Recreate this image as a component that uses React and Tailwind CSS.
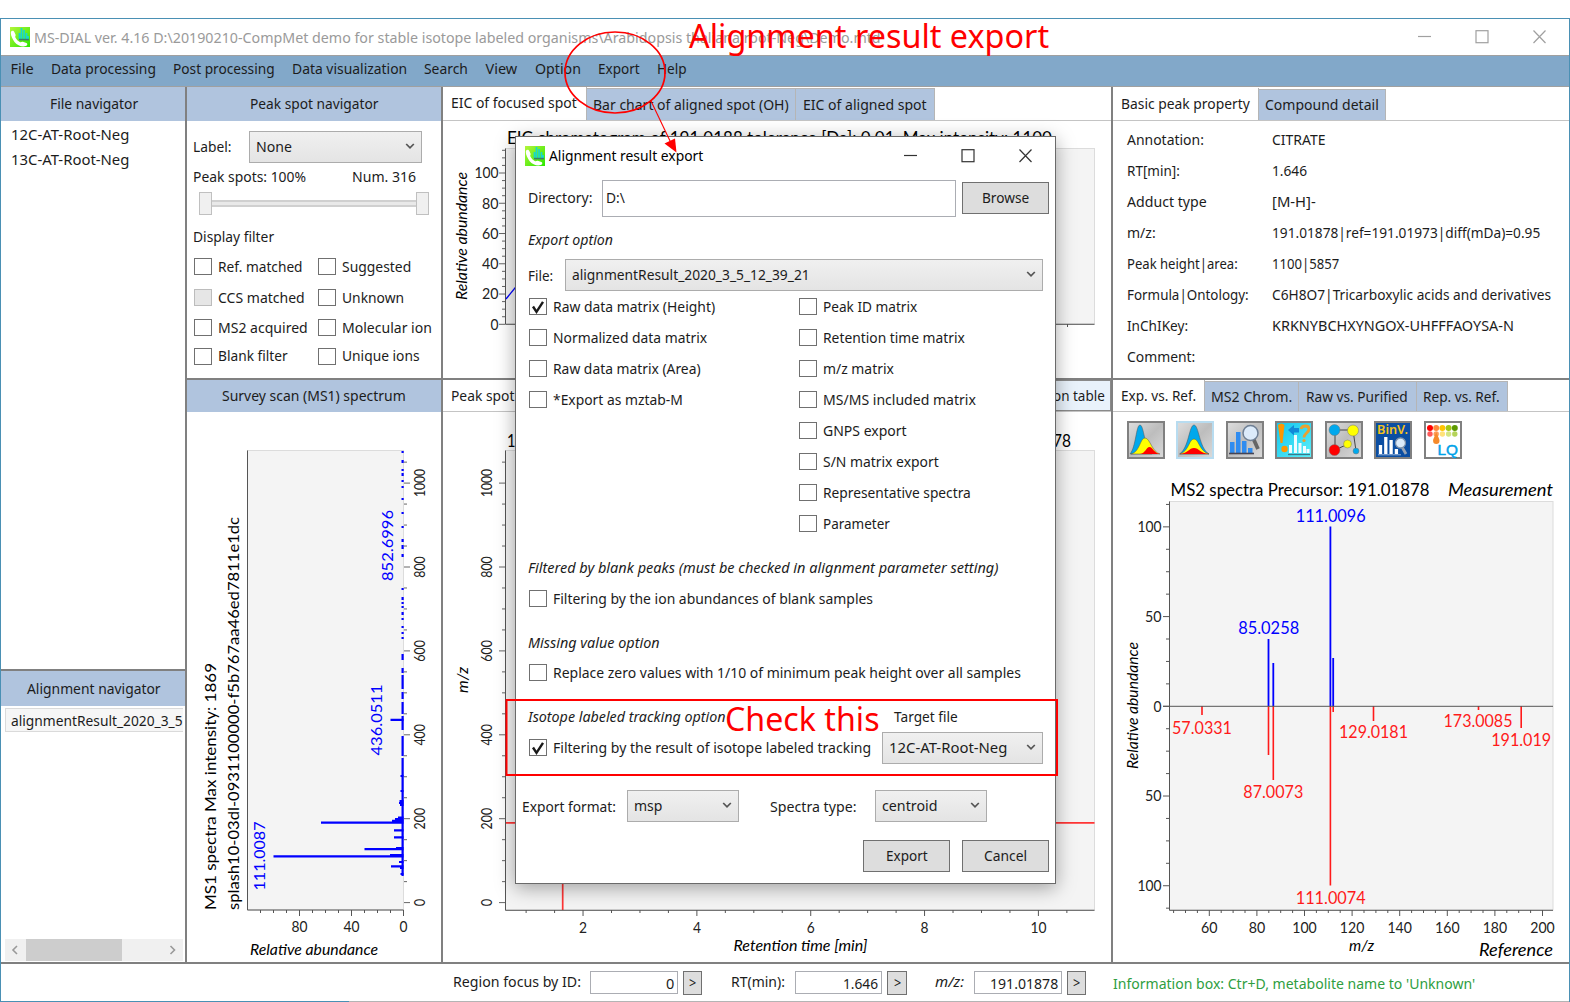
import { useLayoutEffect, useRef, useState } from "react";

const UI = "font-['Noto_Sans',sans-serif]";

// Text set to an exact advance width.
function T({ w, className = "", children }) {
  const ref = useRef(null);
  const [scale, setScale] = useState(1);
  useLayoutEffect(() => {
    if (w) setScale(w / ref.current.offsetWidth);
  }, [w, children]);
  return (
    <span className={`inline-block flex-none whitespace-pre ${className}`} style={{ width: w }}>
      <span ref={ref} className="inline-block origin-left" style={{ transform: `translateY(-1px) scaleX(${scale})` }}>
        {children}
      </span>
    </span>
  );
}

function AppIcon({ className }) {
  return (
    <svg className={`flex-none ${className}`} viewBox="0 0 20 20">
      <defs>
        <linearGradient id="lime" x1="0" y1="0" x2="1" y2="1">
          <stop offset="0" stopColor="#b4f53a" />
          <stop offset="1" stopColor="#2be800" />
        </linearGradient>
      </defs>
      <rect width="20" height="20" fill="url(#lime)" />
      <path d="M9.500 12V6M11.500 12V1M14 12V3M16.500 12V6M18 12V9" stroke="#17d6cf" strokeWidth="1.700" />
      <path d="M9 12.600h10" stroke="#3c7d6a" strokeWidth="1.600" />
      <path d="M1 4.800c.8-1.300 2.600-1.400 3.300.3l1.300 2.700c.3.900-.7 1.500-.3 2.500 1 2.300 2.800 4 4.800 4.900 1 .4 1.600-.7 2.700-.4l3.600 1.200c1.500.7 1 2.300-.6 3-3.200 1.300-8.200-.2-11.300-4C2.300 12.200.2 7.500 1 4.800z" fill="#fff" />
    </svg>
  );
}

const Chevron = ({ className = "" }) => (
  <svg className={`flex-none ${className}`} width="10" height="7" viewBox="0 0 10 7">
    <path d="M1.200 1l3.800 3.900L8.800 1" fill="none" stroke="#555" strokeWidth="1.700" />
  </svg>
);

function Select({ className, text, w }) {
  return (
    <div className={`flex flex-none items-center justify-between border border-[#acacac] bg-gradient-to-b from-[#f0f0f0] to-[#e4e4e4] pl-[6px] pr-[6px] ${className}`}>
      <T w={w}>{text}</T>
      <Chevron />
    </div>
  );
}

function Check({ label, w, checked, disabled, gap = "ml-[6px]" }) {
  return (
    <div className="flex h-full flex-none items-center">
      <span className={`flex h-[17px] w-[18px] flex-none items-center justify-center border ${disabled ? "border-[#bcbcbc] bg-[#e6e6e6]" : "border-[#707070] bg-white"}`}>
        {checked && (
          <svg width="14" height="14" viewBox="0 0 14 14">
            <path d="M2 6.500L5.500 11.800 12 1.800" fill="none" stroke="#1a1a1a" strokeWidth="2.400" />
          </svg>
        )}
      </span>
      <T w={w} className={gap}>{label}</T>
    </div>
  );
}

function Btn({ className, text, w }) {
  return (
    <div className={`flex flex-none items-center justify-center border border-[#707070] bg-[#dddddd] ${className}`}>
      <T w={w}>{text}</T>
    </div>
  );
}

const Header = ({ className, text, w }) => (
  <div className={`flex flex-none items-center justify-center bg-[#b0c4de] ${className}`}>
    <T w={w}>{text}</T>
  </div>
);

function Controls({ color, className, size, gap }) {
  return (
    <svg className={`flex-none ${className}`} width={size + gap * 2} height="14" viewBox={`0 0 ${size + gap * 2} 14`} fill="none" stroke={color} strokeWidth="1.200">
      <path d={`M0 6.500h${size}`} />
      <rect x={gap + 0.5} y="0.700" width={size - 1} height={size - 1} />
      <path d={`M${gap * 2 + 0.5} .5L${gap * 2 + size - 0.5} ${size}M${gap * 2 + size - 0.5} .5L${gap * 2 + 0.5} ${size}`} />
    </svg>
  );
}

// Chart label, spanning w pixels; v turns it to read upwards.
function L({ x, y, w, s = 14.5, fill = "#222", v, it, a = "middle", children }) {
  return (
    <text x={x} y={y} dy={s * (v ? 0.31 : 0.36)} textLength={w} lengthAdjust="spacingAndGlyphs" fontSize={s} fill={fill} textAnchor={a} fontStyle={it ? "italic" : "normal"} fontFamily="Lato, sans-serif" transform={v ? `rotate(-90 ${x} ${y})` : undefined}>
      {children}
    </text>
  );
}

const range = (a, b, step) => {
  const out = [];
  for (let v = a; v <= b + 1e-6; v += step) out.push(v);
  return out;
};

const BLUE = "#0000ff";
const RED = "#ff1a1a";

function MzAxis({ x, dir, labelX }) {
  const y = (v) => 902.6 - v * 0.4195;
  return (
    <g>
      <path stroke="#666" d={range(0, 1050, 50).map((v) => `M${x} ${y(v)}h${dir * (v % 200 ? 3 : 6)}`).join("")} />
      {range(0, 1000, 200).map((v) => (
        <L key={v} x={labelX} y={y(v)} v w={v === 0 ? 7.5 : v === 1000 ? 28 : 21.5} s={14.5}>{String(v)}</L>
      ))}
    </g>
  );
}

function SurveyChart() {
  const noise = [[451, 1], [460, 3], [469, 2], [473, 3], [480, 2], [486, 1], [498, 2], [512, 2], [526, 1], [539, 3], [545, 4], [554, 3], [588, 1], [597, 3], [602, 2], [606, 1], [612, 3], [618, 1], [626, 2], [632, 1], [637, 2], [654, 6], [668, 5], [675, 14], [692, 7], [702, 12], [716, 10], [726, 4], [736, 20], [758, 118]];
  const peaks = [[321, 822.6], [273.5, 856.3], [364.5, 849.2], [391, 866.3], [394, 837.3], [394, 830.3], [390.5, 719.8], [392, 820.8], [395, 819], [398, 817.5], [399, 803], [399.5, 801], [400, 805], [396, 848], [399, 862], [390, 855], [400.5, 776], [400.5, 791], [400.5, 874], [400, 868]];
  return (
    <svg className="block flex-none" width="254" height="550" viewBox="187 412 254 550">
      <rect x="247.500" y="450.500" width="156" height="459.500" fill="#f4f4f4" stroke="#dcdcdc" />
      <path d="M247.500 450.500V910H403.500" fill="none" stroke="#555" />
      <path d={peaks.map(([x, y]) => `M${x} ${y}H403.5`).join("")} stroke={BLUE} strokeWidth="2.2" />
      <path d={noise.map(([y, h]) => `M402.6 ${y}v${Math.max(h, 2)}`).join("")} stroke={BLUE} strokeWidth="2.2" />
      <path d={range(0, 110, 10).map((v) => `M${403.5 - v * 1.3} 910v${v % 40 ? 3 : 6}`).join("")} stroke="#555" />
      <L x={299.5} y={927} w={16}>80</L>
      <L x={351.5} y={927} w={16}>40</L>
      <L x={403.5} y={927} w={8}>0</L>
      <L x={314} y={949.5} w={128} it fill="#000">Relative abundance</L>
      <MzAxis x={404} dir={1} labelX={420.5} />
      <L x={211} y={786.5} w={247} s={16} v fill="#000">MS1 spectra Max intensity: 1869</L>
      <L x={234} y={713.5} w={393} s={16} v fill="#000">splash10-03dl-0931100000-f5b767aa46ed7811e1dc</L>
      <L x={260.5} y={856} w={69} s={16} v fill={BLUE}>111.0087</L>
      <L x={377.5} y={720} w={71} s={16} v fill={BLUE}>436.0511</L>
      <L x={388.5} y={545.5} w={71} s={16} v fill={BLUE}>852.6996</L>
    </svg>
  );
}

function EicChart() {
  return (
    <svg className="block flex-none" width="668" height="257" viewBox="443 121 668 257">
      <L x={779.5} y={138} w={545} s={16.5} fill="#000">EIC chromatogram of 191.0188 tolerance [Da]: 0.01, Max intensity: 1100</L>
      <rect x="505.500" y="148.500" width="589" height="175.500" fill="#f4f4f4" stroke="#dcdcdc" />
      <path d="M505.500 148.500V324.300H1094.500" fill="none" stroke="#555" />
      <path d={range(0, 115, 5).map((v) => `M505 ${324.3 - v * 1.513}h${v % 20 ? -3 : -6}`).join("")} stroke="#666" />
      {[0, 20, 40, 60, 80, 100].map((v) => (
        <L key={v} x={498.5} y={324.5 - v * 1.513} a="end" w={v === 100 ? 24 : v ? 16.5 : 8}>{String(v)}</L>
      ))}
      <path d="M1067.500 324v3" stroke="#555" />
      <path d="M506 299L524 277" stroke={BLUE} strokeWidth="1.300" />
      <L x={463} y={236} w={128} it v fill="#000">Relative abundance</L>
    </svg>
  );
}

function SpotChart() {
  return (
    <svg className="block flex-none" width="668" height="550" viewBox="443 412 668 550">
      <L x={507} y={441} w={8.5} a="start" s={16.5} fill="#000">1</L>
      <L x={1071} y={441} w={18} a="end" s={16.5} fill="#000">78</L>
      <rect x="505.500" y="450.500" width="589" height="459.500" fill="#f4f4f4" stroke="#dcdcdc" />
      <path d="M505.500 822.800H1094.500M562.700 451V910" stroke="#ff3535" strokeWidth="1.700" />
      <path d="M505.500 450.500V910.300H1094.500" fill="none" stroke="#555" />
      <MzAxis x={505} dir={-1} labelX={488} />
      <path d={range(1, 10.5, 0.5).map((v) => `M${469.2 + v * 56.92} 910v${v % 2 ? 3 : 6}`).join("")} stroke="#555" />
      {[2, 4, 6, 8, 10].map((v) => (
        <L key={v} x={469.2 + v * 56.92} y={927.5} w={v === 10 ? 16 : 8}>{String(v)}</L>
      ))}
      <L x={464} y={680} w={26} it v fill="#000">m/z</L>
      <L x={800.5} y={945.5} w={134} it fill="#000">Retention time [min]</L>
    </svg>
  );
}

function Ms2Chart() {
  const up = [[1268.5, 639], [1273.3, 663], [1330.4, 526.5], [1333.2, 658]];
  const down = [[1202, 715], [1268.5, 755], [1273.3, 780], [1330.4, 885.5], [1333.2, 712], [1373.5, 721], [1478.5, 710], [1521.2, 728]];
  const marks = [
    ["85.0258", 1268.7, 628.5, 61, BLUE], ["111.0096", 1330.7, 516, 70, BLUE], ["57.0331", 1202, 728, 60, RED],
    ["129.0181", 1373.5, 732.5, 69, RED], ["173.0085", 1478, 721.5, 69, RED], ["191.019", 1521.2, 740, 60, RED],
    ["87.0073", 1273.3, 792, 60, RED], ["111.0074", 1330.7, 898, 70, RED],
  ];
  return (
    <svg className="block flex-none" width="456" height="502" viewBox="1113 460 456 502">
      <L x={1170.5} y={490} a="start" w={259} s={16.5} fill="#000">MS2 spectra Precursor: 191.01878</L>
      <L x={1553} y={490} a="end" w={105} s={16.5} it fill="#000">Measurement</L>
      <rect x="1169.500" y="501.500" width="383.500" height="408.500" fill="#f4f4f4" stroke="#dcdcdc" />
      <path d="M1169.500 501.500V910.300H1553" fill="none" stroke="#555" />
      <path d={up.map(([x, y]) => `M${x} ${y}V706`).join("")} stroke={BLUE} strokeWidth="1.800" />
      <path d={down.map(([x, y]) => `M${x} ${y}V706`).join("")} stroke={RED} strokeWidth="1.600" />
      <path d="M1163 706.300H1553" stroke="#555" />
      <path d={range(-9, 9, 1).map((k) => `M1169 ${706.3 + k * 22.43}h${k % 4 ? -3 : -6}`).join("")} stroke="#555" />
      {[-100, -50, 0, 50, 100].map((v) => (
        <L key={v} x={1161.5} y={706.5 - v * 1.794} a="end" w={v === 0 ? 8 : v % 100 ? 16.5 : 24}>{String(Math.abs(v))}</L>
      ))}
      <path d={range(45, 200, 5).map((v) => `M${1209.3 + (v - 60) * 2.38} 910v${v % 20 ? 3 : 6}`).join("")} stroke="#555" />
      {range(60, 200, 20).map((v) => (
        <L key={v} x={1209.3 + (v - 60) * 2.38} y={927.5} w={v < 100 ? 16.5 : 24.5}>{String(v)}</L>
      ))}
      {marks.map(([t, x, y, w, c]) => (
        <L key={t} x={x} y={y} w={w} s={16.5} fill={c}>{t}</L>
      ))}
      <L x={1134} y={705.5} w={127} it v fill="#000">Relative abundance</L>
      <L x={1361.5} y={946} w={25} it fill="#000">m/z</L>
      <L x={1553} y={950.5} a="end" w={74} s={16.5} it fill="#000">Reference</L>
    </svg>
  );
}

function ToolIcon({ fill = "url(#steel)", edge = "#808080", children }) {
  return (
    <svg className="block flex-none" width="38" height="38" viewBox="0 0 38 38">
      <defs>
        <linearGradient id="steel" x1="0" y1="0" x2="1" y2="1">
          <stop offset="0" stopColor="#dedede" />
          <stop offset=".5" stopColor="#bdbdbd" />
          <stop offset="1" stopColor="#dadada" />
        </linearGradient>
        <linearGradient id="aqua" x1="0" y1="0" x2="1" y2="1">
          <stop offset="0" stopColor="#12c4ec" />
          <stop offset="1" stopColor="#5df0fa" />
        </linearGradient>
      </defs>
      <rect x="1" y="1" width="36" height="36" fill={fill} stroke={edge} strokeWidth="2" />
      {children}
    </svg>
  );
}

function Tools() {
  const dots = [["#f00", "#ff5a5a"], ["#ff8a3d", "#ff9c5a"], ["#ffc400", "#ffe27a"], ["#a4c813", "#d3e584"], ["#5d9a00", "#b5d35a"]];
  return (
    <div className="flex h-[48px] flex-none gap-[11.600px] pl-[13.500px] pt-[9px]">
      <ToolIcon>
        <path d="M3 33C9 26 9 4 13 4s4 22 12 29z" fill="#00a8ec" stroke="#555" strokeWidth=".5" />
        <path d="M4 33C13 31 13 17 18 17S25 31 33 33z" fill="#ff0" stroke="#555" strokeWidth=".5" />
        <path d="M13 33c6-1 6-7 9.500-7s4 6 10.500 7z" fill="#f00" />
      </ToolIcon>
      <ToolIcon edge="#b8dcf0">
        <path d="M3.500 33C13 27 13 4 18 4s5 23 15 29z" fill="#00a8ec" stroke="#555" strokeWidth=".5" />
        <path d="M4 33c9-3 9-15 14-15s5 12 15 15z" fill="#ff0" stroke="#555" strokeWidth=".5" />
        <path d="M4 33c8-1 9-6 14-6s6 5 15 6z" fill="#f00" />
      </ToolIcon>
      <ToolIcon>
        <path d="M4 21h4.500v11H4zM10 11h4.500v21H10zM16 20h4.500v12H16zM22 27h4.500v5H22z" fill="#2f8cf0" />
        <path d="M3 32.500h25" stroke="#445" strokeWidth="1.600" />
        <path d="M27.500 18l4.500 10" stroke="#666" strokeWidth="3.800" />
        <circle cx="24.500" cy="12" r="7.500" fill="#dcebfa" stroke="#6e7f94" strokeWidth="1.500" />
      </ToolIcon>
      <ToolIcon fill="url(#aqua)">
        <path d="M3 4q3.500-3 6.500 0L7.500 22h-2z" fill="#ff9600" />
        <path d="M13 9l6-5v3h5v4.500h-5v3z" fill="#1289d8" />
        <circle cx="9.500" cy="28" r="3.200" fill="#ff9600" />
        <path d="M26 8c1-4 8-4 8 0s-5 4-5 8.500" fill="none" stroke="#e9a030" strokeWidth="2.800" />
        <circle cx="29" cy="19.500" r="1.600" fill="#e9a030" />
        <path d="M15.500 24v8M20.500 14v18M25 22v10M29.500 25v7M33 28v4" stroke="#f0fbff" strokeWidth="3" />
        <path d="M13 33.500h22" stroke="#39798a" strokeWidth="1.300" />
      </ToolIcon>
      <ToolIcon>
        <path d="M10 9h17M10 9v20l13-6M28 9l3 21" fill="none" stroke="#444" strokeWidth="1" />
        <g stroke="#777" strokeWidth=".5">
          <circle cx="9.500" cy="9" r="5.500" fill="#00a8ec" />
          <circle cx="28" cy="9.500" r="5.500" fill="#ff0" />
          <circle cx="9.500" cy="29" r="5.500" fill="#f00" />
          <circle cx="22.500" cy="23" r="4" fill="#ff0" />
          <circle cx="31" cy="30" r="3" fill="#00a8ec" />
        </g>
      </ToolIcon>
      <ToolIcon fill="#0b4ea2">
        <text x="3" y="13" fontSize="12" fontWeight="600" textLength="31" lengthAdjust="spacingAndGlyphs" fill="#f5c21b" fontFamily="Noto Sans, sans-serif">BinV.</text>
        <path d="M6.500 24v9M11.800 16v17M17.100 19v14M22.400 28v5" stroke="#fff" strokeWidth="3.300" />
        <path d="M4 33.800h23" stroke="#9db8dd" strokeWidth="1" />
        <path d="M28 26l4 7" stroke="#98a4b4" strokeWidth="2.800" />
        <circle cx="26.500" cy="22" r="5" fill="#dcebfa" stroke="#8194ac" strokeWidth="1.300" />
      </ToolIcon>
      <ToolIcon fill="#fff">
        {dots.map(([a, b], i) => (
          <g key={a}>
            <circle cx={6 + i * 6.2} cy="7" r="3" fill={a} />
            <circle cx={6 + i * 6.2} cy="13" r="2.700" fill={b} />
          </g>
        ))}
        <path d="M12.200 11c2 5 3.300 7 3.300 8.800a3.200 3.200 0 0 1-6.400 0c0-1.800 1.500-4 3.100-8.800z" fill="#f58a2c" />
        <text x="13.500" y="34" fontSize="15.500" fontWeight="500" textLength="20.500" lengthAdjust="spacingAndGlyphs" fill="#00a2e8" stroke="#00a2e8" strokeWidth=".5" fontFamily="Liberation Sans, sans-serif">LQ</text>
      </ToolIcon>
    </div>
  );
}

function Tab({ className, text, w, active }) {
  return (
    <div className={`flex flex-none items-center justify-center border-[#b5b5b5] ${active ? "border-r bg-white" : "mt-px border-r border-t bg-[#b0c4de]"} ${className}`}>
      <T w={w}>{text}</T>
    </div>
  );
}

const menu = [["File", 23], ["Data processing", 105], ["Post processing", 102], ["Data visualization", 115], ["Search", 44], ["View", 32], ["Option", 46], ["Export", 42], ["Help", 30]];

const props = [
  ["Annotation:", 77, "CITRATE", 54], ["RT[min]:", 53, "1.646", 35], ["Adduct type", 80, "[M-H]-", 44],
  ["m/z:", 29, "191.01878|ref=191.01973|diff(mDa)=0.95", 268], ["Peak height|area:", 111, "1100|5857", 67],
  ["Formula|Ontology:", 122, "C6H8O7|Tricarboxylic acids and derivatives", 279],
  ["InChIKey:", 61, "KRKNYBCHXYNGOX-UHFFFAOYSA-N", 242], ["Comment:", 68, "", 0],
];

const filters = [
  ["Ref. matched", 85, "Suggested", 69, "h-[31px]"], ["CCS matched", 87, "Unknown", 62, "h-[31px]"],
  ["MS2 acquired", 90, "Molecular ion", 90, "h-[29px]"], ["Blank filter", 70, "Unique ions", 78, "h-[28px]"],
];

const exports = [
  ["Raw data matrix (Height)", 162, "Peak ID matrix", 94], ["Normalized data matrix", 154, "Retention time matrix", 142],
  ["Raw data matrix (Area)", 148, "m/z matrix", 71], ["*Export as mztab-M", 130, "MS/MS included matrix", 153],
  [null, 0, "GNPS export", 84], [null, 0, "S/N matrix export", 116], [null, 0, "Representative spectra", 148], [null, 0, "Parameter", 67],
];

const VSplit = () => <div className="w-[2px] flex-none bg-[#808080]" />;
const HSplit = () => <div className="h-[2px] flex-none bg-[#808080]" />;

function Dialog() {
  return (
    <div className="absolute left-[515px] top-[136px] flex h-[748px] w-[541px] flex-col border border-[#6a6a6a] bg-white shadow-[0_4px_18px_rgba(0,0,0,0.35)]">
      <div className="flex h-[37px] flex-none items-center pl-[9px]">
        <AppIcon className="h-[20px] w-[20px]" />
        <T w={154} className="ml-[4px] mt-[1px] text-black">Alignment result export</T>
        <Controls color="#333" className="ml-[201px]" size={13} gap={57.5} />
      </div>
      <div className="flex h-[48px] flex-none items-center pl-[12px]">
        <T w={64}>Directory:</T>
        <div className="ml-[10px] flex h-[37px] w-[354px] flex-none items-center border border-[#abadb3] pl-[3px]"><T w={19}>D:\</T></div>
        <Btn className="ml-[6px] h-[32px] w-[87px]" text="Browse" w={47} />
      </div>
      <div className="flex h-[36px] flex-none items-center pl-[12px] italic"><T w={85}>Export option</T></div>
      <div className="flex h-[33px] flex-none items-center pl-[12px]">
        <T w={25} className="mt-[3px]">File:</T>
        <Select className="ml-[12px] h-[32px] w-[478px]" text="alignmentResult_2020_3_5_12_39_21" w={238} />
      </div>
      {exports.map(([a, aw, b, bw], i) => (
        <div key={b} className="flex h-[31px] flex-none items-center pl-[13px]">
          <div className="w-[270px] flex-none">{a && <Check label={a} w={aw} checked={i === 0} />}</div>
          <Check label={b} w={bw} />
        </div>
      ))}
      <div className="mt-[17px] flex h-[24px] flex-none items-center pl-[12px] italic"><T w={470}>Filtered by blank peaks (must be checked in alignment parameter setting)</T></div>
      <div className="mt-[3px] flex h-[31px] flex-none items-center pl-[13px]"><Check label="Filtering by the ion abundances of blank samples" w={320} /></div>
      <div className="mt-[17px] flex h-[24px] flex-none items-center pl-[12px] italic"><T w={132}>Missing value option</T></div>
      <div className="mt-[2px] flex h-[31px] flex-none items-center pl-[13px]"><Check label="Replace zero values with 1/10 of minimum peak height over all samples" w={468} /></div>
      <div className="mt-[17px] flex h-[24px] flex-none items-center pl-[12px]">
        <T w={198} className="italic">Isotope labeled tracking option</T>
        <T w={64} className="ml-[168px]">Target file</T>
      </div>
      <div className="mt-[2px] flex h-[33px] flex-none items-center pl-[13px]">
        <Check label="Filtering by the result of isotope labeled tracking" w={318} checked />
        <Select className="ml-[11px] h-[32px] w-[161px]" text="12C-AT-Root-Neg" w={118} />
      </div>
      <div className="mt-[25px] flex h-[33px] flex-none items-center pl-[6px]">
        <T w={94} className="mt-[2px]">Export format:</T>
        <Select className="ml-[11px] h-[32px] w-[112px]" text="msp" w={28} />
        <T w={86} className="ml-[31px] mt-[2px]">Spectra type:</T>
        <Select className="ml-[19px] h-[32px] w-[112px]" text="centroid" w={55} />
      </div>
      <div className="mt-[18px] flex h-[32px] flex-none justify-end gap-[12px] pr-[6px]">
        <Btn className="w-[87px]" text="Export" w={42} />
        <Btn className="w-[87px]" text="Cancel" w={43} />
      </div>
    </div>
  );
}

function Annotations() {
  return (
    <div className="absolute inset-0">
      <svg className="absolute inset-0" width="1570" height="1002" viewBox="0 0 1570 1002">
        <ellipse cx="615" cy="72.500" rx="50" ry="40.500" fill="none" stroke="#f00" strokeWidth="1.700" />
        <path d="M651 101L671 143" stroke="#f00" strokeWidth="1.100" />
        <path d="M676.500 152.500L664.500 143.500 675 138.500z" fill="#f00" />
        <rect x="506.500" y="700" width="550.500" height="75" fill="none" stroke="#f00" strokeWidth="2" />
      </svg>
      <div className="absolute left-[689px] top-[13px] text-[33px] leading-[48px] text-[#ff0000]"><T w={360}>Alignment result export</T></div>
      <div className="absolute left-[725px] top-[696px] text-[33px] leading-[48px] text-[#ff0000]"><T w={155}>Check this</T></div>
    </div>
  );
}

export default function App() {
  return (
    <div className={`relative h-[1002px] w-[1570px] overflow-hidden bg-white pt-[18px] text-[14.500px] leading-[20px] text-[#1c1c1c] ${UI}`}>
      <div className="flex h-[984px] flex-col border border-b-0 border-[#4a90b4]">
        <div className="flex h-[36px] flex-none items-center pl-[9px]">
          <AppIcon className="h-[20px] w-[20px]" />
          <T w={847} className="ml-[4px] mt-[2px] text-[#9a9a9a]">MS-DIAL ver. 4.16 D:\20190210-CompMet demo for stable isotope labeled organisms\Arabidopsis thaliana root-Neg\Demo.mtd</T>
          <Controls color="#a0a0a0" className="ml-[537px]" size={13} gap={57.5} />
        </div>
        <div className="flex h-[32px] flex-none items-center gap-[17.200px] border-y-[1.500px] border-[#a0a0a0] bg-[#82a8c9] pb-[5px] pl-[9.500px]">
          {menu.map(([t, w]) => <T key={t} w={w}>{t}</T>)}
        </div>

        <div className="flex h-[875px] flex-none">
          <div className="flex w-[184px] flex-none flex-col">
            <Header className="h-[34px] pb-[1px] pl-[2px]" text="File navigator" w={88} />
            <div className="flex h-[548px] flex-none flex-col pl-[10px] pt-[1px]">
              <div className="flex h-[25px] items-center"><T w={118}>12C-AT-Root-Neg</T></div>
              <div className="flex h-[25px] items-center"><T w={118}>13C-AT-Root-Neg</T></div>
            </div>
            <HSplit />
            <Header className="h-[35px] pl-[2px]" text="Alignment navigator" w={134} />
            <div className="ml-[4px] mr-[2px] mt-[2px] flex h-[24px] flex-none items-center overflow-hidden border border-r-0 border-[#dadada] bg-[#f6f6f6] pl-[5px] pt-[2px]">
              <T w={172}>alignmentResult_2020_3_5</T>
            </div>
            <div className="ml-[4px] mr-[2px] mt-auto flex h-[22px] flex-none items-center bg-[#f0f0f0]">
              <svg width="21" height="12" viewBox="0 0 21 12"><path d="M12 2L8 6l4 4" fill="none" stroke="#999" strokeWidth="1.600" /></svg>
              <div className="h-full w-[96px] bg-[#cdcdcd]" />
              <svg className="ml-auto" width="22" height="12" viewBox="0 0 22 12"><path d="M9.500 2l4 4-4 4" fill="none" stroke="#999" strokeWidth="1.600" /></svg>
            </div>
            <div className="h-[1px] flex-none" />
          </div>
          <VSplit />

          <div className="flex w-[254px] flex-none flex-col">
            <Header className="h-[34px] pb-[1px]" text="Peak spot navigator" w={129} />
            <div className="flex h-[257px] flex-none flex-col pl-[6px] pt-[9px]">
              <div className="flex h-[33px] flex-none items-center">
                <T w={38}>Label:</T>
                <Select className="ml-[18px] h-[32px] w-[173px]" text="None" w={36} />
              </div>
              <div className="flex h-[28px] flex-none items-center">
                <T w={113}>Peak spots: 100%</T>
                <T w={64} className="ml-[46px]">Num. 316</T>
              </div>
              <div className="ml-[6px] flex h-[24px] w-[230px] flex-none items-center">
                <div className="h-[23px] w-[13px] flex-none border border-[#c0c0c0] bg-[#f0f0f0]" />
                <div className="h-[7px] flex-1 border-y-2 border-[#d0d0d0] bg-[#e9e9e9]" />
                <div className="h-[23px] w-[13px] flex-none border border-[#c0c0c0] bg-[#f0f0f0]" />
              </div>
              <div className="mt-[8px] flex h-[28px] flex-none items-center"><T w={81}>Display filter</T></div>
              <div className="flex flex-col pl-[1px]">
                {filters.map(([a, aw, b, bw, h], i) => (
                  <div key={a} className={`flex flex-none items-center ${h}`}>
                    <div className="w-[124px] flex-none"><Check label={a} w={aw} disabled={i === 1} /></div>
                    <Check label={b} w={bw} />
                  </div>
                ))}
              </div>
            </div>
            <HSplit />
            <Header className="h-[32px] pb-[1px]" text="Survey scan (MS1) spectrum" w={184} />
            <SurveyChart />
          </div>
          <VSplit />

          <div className="flex w-[668px] flex-none flex-col">
            <div className="flex h-[34px] flex-none border-b border-[#c4c4c4]">
              <Tab className="w-[144px] pb-[1px] pr-[1px]" text="EIC of focused spot" w={126} active />
              <Tab className="w-[209px]" text="Bar chart of aligned spot (OH)" w={196} />
              <Tab className="w-[139px]" text="EIC of aligned spot" w={124} />
            </div>
            <EicChart />
            <HSplit />
            <div className="flex h-[32px] flex-none justify-between border-b border-[#c4c4c4]">
              <div className="flex items-center pl-[8px]"><T w={63}>Peak spot</T></div>
              <div className="flex w-[110px] items-center justify-end border border-[#8a8a8a] bg-[#e9f2fb] pr-[5px] pt-[1px]"><T w={52}>on table</T></div>
            </div>
            <SpotChart />
          </div>
          <VSplit />

          <div className="flex w-[456px] flex-none flex-col">
            <div className="flex h-[34px] flex-none border-b border-[#c4c4c4] pt-px">
              <Tab className="w-[146px] pb-[1px] pr-[1px]" text="Basic peak property" w={129} active />
              <Tab className="w-[127px] pr-[1px]" text="Compound detail" w={114} />
            </div>
            <div className="flex h-[257px] flex-none flex-col pl-[14px] pt-[3px]">
              {props.map(([a, aw, b, bw]) => (
                <div key={a} className="flex h-[31px] flex-none items-center">
                  <div className="w-[145px] flex-none"><T w={aw}>{a}</T></div>
                  {b && <T w={bw}>{b}</T>}
                </div>
              ))}
            </div>
            <HSplit />
            <div className="flex h-[32px] flex-none border-b border-[#c4c4c4]">
              <Tab className="w-[92px] pr-[1px]" text="Exp. vs. Ref." w={75} active />
              <Tab className="w-[94px] pr-[1px]" text="MS2 Chrom." w={81} />
              <Tab className="w-[118px] pr-[1px]" text="Raw vs. Purified" w={102} />
              <Tab className="w-[91px] pr-[1px]" text="Rep. vs. Ref." w={77} />
            </div>
            <Tools />
            <Ms2Chart />
          </div>
        </div>
        <HSplit />

        <div className="flex flex-1 items-center pl-[452px]">
          <T w={128} className="mb-[2px]">Region focus by ID:</T>
          <div className="ml-[9px] flex h-[23px] w-[88px] flex-none items-center justify-end border border-[#abadb3] pr-[3px] pt-[2px]"><T w={8}>0</T></div>
          <Btn className="ml-[5px] h-[24px] w-[19px]" text=">" w={7} />
          <T w={54} className="mb-[2px] ml-[29px]">RT(min):</T>
          <div className="ml-[10px] flex h-[23px] w-[87px] flex-none items-center justify-end border border-[#abadb3] pr-[3px] pt-[2px]"><T w={35}>1.646</T></div>
          <Btn className="ml-[5px] h-[24px] w-[20px]" text=">" w={7} />
          <T w={29} className="mb-[2px] ml-[28px] italic">m/z:</T>
          <div className="ml-[10px] flex h-[23px] w-[88px] flex-none items-center justify-end border border-[#abadb3] pr-[3px] pt-[2px]"><T w={68}>191.01878</T></div>
          <Btn className="ml-[5px] h-[24px] w-[19px]" text=">" w={7} />
          <T w={362} className="ml-[27px] mt-[3px] text-[#2f9e41]">Information box: Ctr+D, metabolite name to 'Unknown'</T>
        </div>
        <div className="flex h-px flex-none bg-[#b4b4b4]"><div className="w-[348px] bg-[#4a90b4]" /></div>
      </div>
      <Dialog />
      <Annotations />
    </div>
  );
}
